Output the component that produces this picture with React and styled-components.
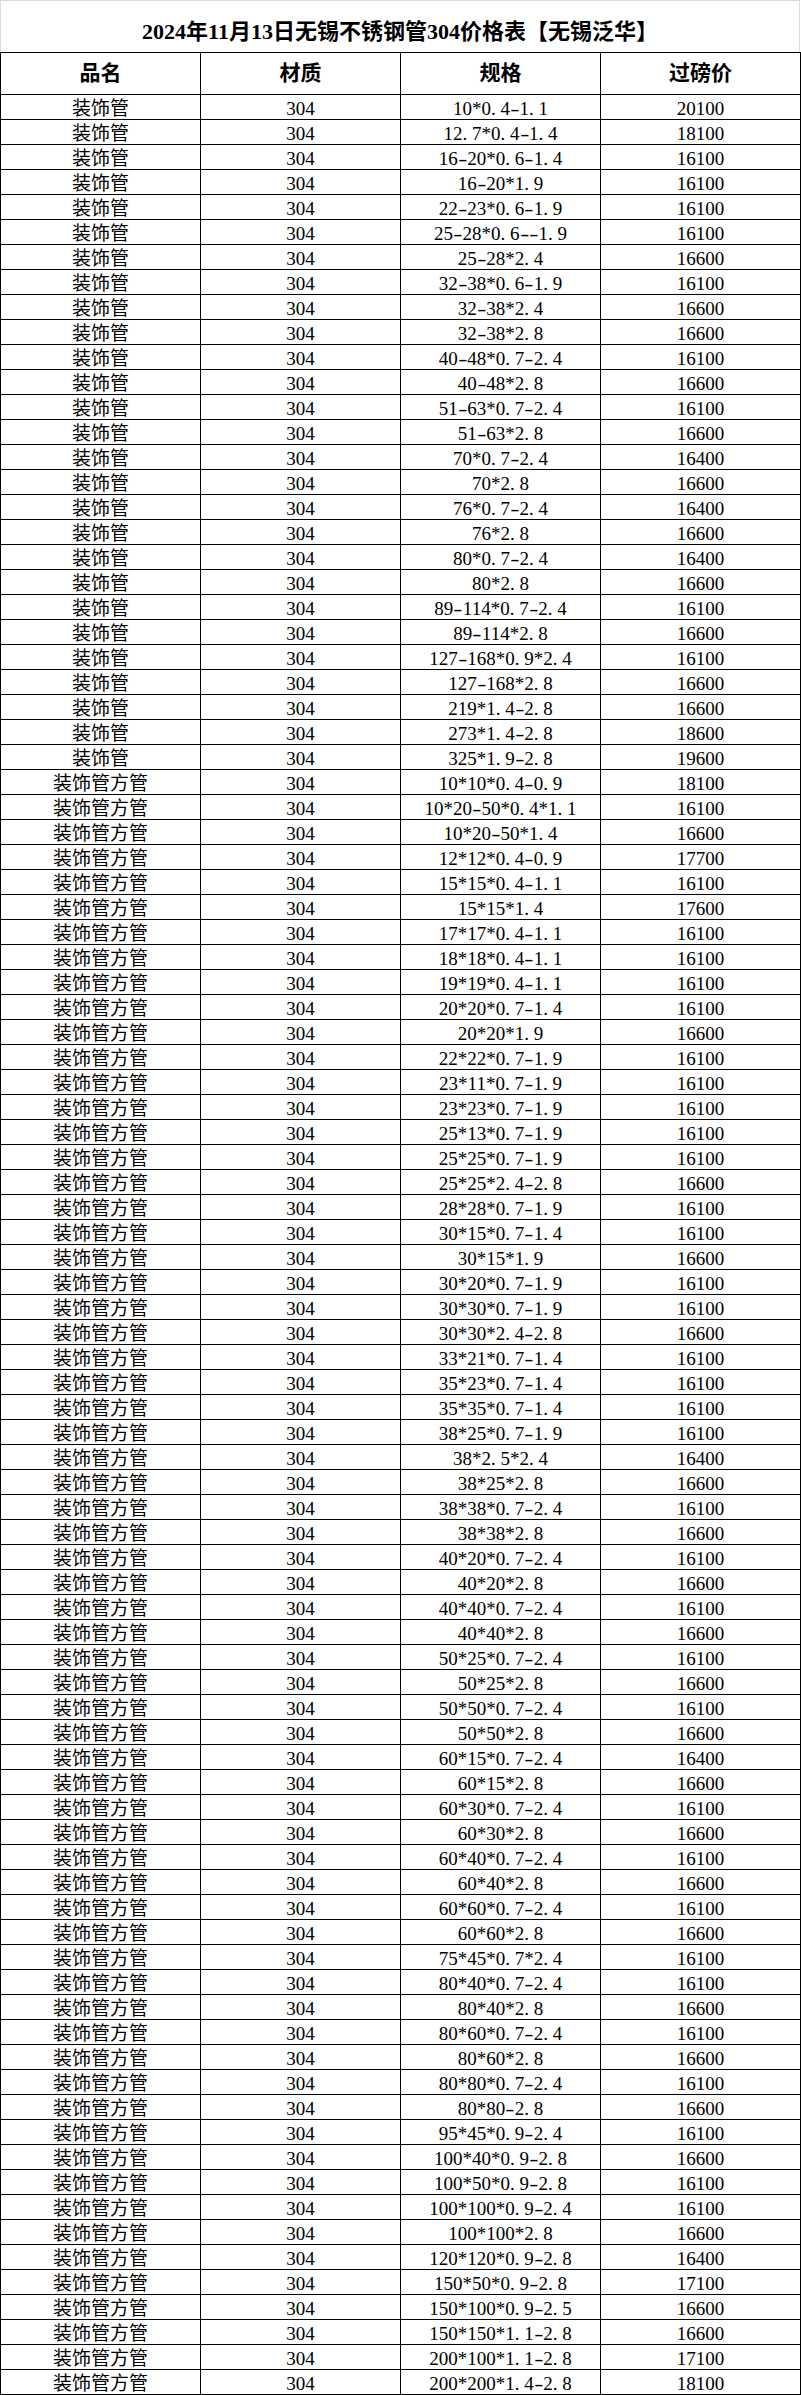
import styled, { createGlobalStyle } from 'styled-components';

const GlobalStyle = createGlobalStyle`
    html, body {
        margin: 0;
        padding: 0;
        background: #ffffff;
    }

    body {
        font-family: "Liberation Serif", "Noto Sans CJK SC", serif;
        color: #000000;
    }
`;

const PIPE = '装饰管';
const SQUARE = '装饰管方管';

// [品名, 规格, 过磅价]
const ROWS = [
    [PIPE, '10*0.4-1.1', '20100'],
    [PIPE, '12.7*0.4-1.4', '18100'],
    [PIPE, '16-20*0.6-1.4', '16100'],
    [PIPE, '16-20*1.9', '16100'],
    [PIPE, '22-23*0.6-1.9', '16100'],
    [PIPE, '25-28*0.6--1.9', '16100'],
    [PIPE, '25-28*2.4', '16600'],
    [PIPE, '32-38*0.6-1.9', '16100'],
    [PIPE, '32-38*2.4', '16600'],
    [PIPE, '32-38*2.8', '16600'],
    [PIPE, '40-48*0.7-2.4', '16100'],
    [PIPE, '40-48*2.8', '16600'],
    [PIPE, '51-63*0.7-2.4', '16100'],
    [PIPE, '51-63*2.8', '16600'],
    [PIPE, '70*0.7-2.4', '16400'],
    [PIPE, '70*2.8', '16600'],
    [PIPE, '76*0.7-2.4', '16400'],
    [PIPE, '76*2.8', '16600'],
    [PIPE, '80*0.7-2.4', '16400'],
    [PIPE, '80*2.8', '16600'],
    [PIPE, '89-114*0.7-2.4', '16100'],
    [PIPE, '89-114*2.8', '16600'],
    [PIPE, '127-168*0.9*2.4', '16100'],
    [PIPE, '127-168*2.8', '16600'],
    [PIPE, '219*1.4-2.8', '16600'],
    [PIPE, '273*1.4-2.8', '18600'],
    [PIPE, '325*1.9-2.8', '19600'],
    [SQUARE, '10*10*0.4-0.9', '18100'],
    [SQUARE, '10*20-50*0.4*1.1', '16100'],
    [SQUARE, '10*20-50*1.4', '16600'],
    [SQUARE, '12*12*0.4-0.9', '17700'],
    [SQUARE, '15*15*0.4-1.1', '16100'],
    [SQUARE, '15*15*1.4', '17600'],
    [SQUARE, '17*17*0.4-1.1', '16100'],
    [SQUARE, '18*18*0.4-1.1', '16100'],
    [SQUARE, '19*19*0.4-1.1', '16100'],
    [SQUARE, '20*20*0.7-1.4', '16100'],
    [SQUARE, '20*20*1.9', '16600'],
    [SQUARE, '22*22*0.7-1.9', '16100'],
    [SQUARE, '23*11*0.7-1.9', '16100'],
    [SQUARE, '23*23*0.7-1.9', '16100'],
    [SQUARE, '25*13*0.7-1.9', '16100'],
    [SQUARE, '25*25*0.7-1.9', '16100'],
    [SQUARE, '25*25*2.4-2.8', '16600'],
    [SQUARE, '28*28*0.7-1.9', '16100'],
    [SQUARE, '30*15*0.7-1.4', '16100'],
    [SQUARE, '30*15*1.9', '16600'],
    [SQUARE, '30*20*0.7-1.9', '16100'],
    [SQUARE, '30*30*0.7-1.9', '16100'],
    [SQUARE, '30*30*2.4-2.8', '16600'],
    [SQUARE, '33*21*0.7-1.4', '16100'],
    [SQUARE, '35*23*0.7-1.4', '16100'],
    [SQUARE, '35*35*0.7-1.4', '16100'],
    [SQUARE, '38*25*0.7-1.9', '16100'],
    [SQUARE, '38*2.5*2.4', '16400'],
    [SQUARE, '38*25*2.8', '16600'],
    [SQUARE, '38*38*0.7-2.4', '16100'],
    [SQUARE, '38*38*2.8', '16600'],
    [SQUARE, '40*20*0.7-2.4', '16100'],
    [SQUARE, '40*20*2.8', '16600'],
    [SQUARE, '40*40*0.7-2.4', '16100'],
    [SQUARE, '40*40*2.8', '16600'],
    [SQUARE, '50*25*0.7-2.4', '16100'],
    [SQUARE, '50*25*2.8', '16600'],
    [SQUARE, '50*50*0.7-2.4', '16100'],
    [SQUARE, '50*50*2.8', '16600'],
    [SQUARE, '60*15*0.7-2.4', '16400'],
    [SQUARE, '60*15*2.8', '16600'],
    [SQUARE, '60*30*0.7-2.4', '16100'],
    [SQUARE, '60*30*2.8', '16600'],
    [SQUARE, '60*40*0.7-2.4', '16100'],
    [SQUARE, '60*40*2.8', '16600'],
    [SQUARE, '60*60*0.7-2.4', '16100'],
    [SQUARE, '60*60*2.8', '16600'],
    [SQUARE, '75*45*0.7*2.4', '16100'],
    [SQUARE, '80*40*0.7-2.4', '16100'],
    [SQUARE, '80*40*2.8', '16600'],
    [SQUARE, '80*60*0.7-2.4', '16100'],
    [SQUARE, '80*60*2.8', '16600'],
    [SQUARE, '80*80*0.7-2.4', '16100'],
    [SQUARE, '80*80-2.8', '16600'],
    [SQUARE, '95*45*0.9-2.4', '16100'],
    [SQUARE, '100*40*0.9-2.8', '16600'],
    [SQUARE, '100*50*0.9-2.8', '16100'],
    [SQUARE, '100*100*0.9-2.4', '16100'],
    [SQUARE, '100*100*2.8', '16600'],
    [SQUARE, '120*120*0.9-2.8', '16400'],
    [SQUARE, '150*50*0.9-2.8', '17100'],
    [SQUARE, '150*100*0.9-2.5', '16600'],
    [SQUARE, '150*150*1.1-2.8', '16600'],
    [SQUARE, '200*100*1.1-2.8', '17100'],
    [SQUARE, '200*200*1.4-2.8', '18100'],
];

const HEADERS = ['品名', '材质', '规格', '过磅价'];

const Sheet = styled.div`
    width: 801px;
`;

const TitleBar = styled.div`
    box-sizing: border-box;
    height: 52px;
    width: 800px;
    border: 1px solid #dcdcdc;
    border-bottom: none;
    display: flex;
    align-items: center;
    justify-content: center;
    padding-top: 4px;
    font-size: 22px;
    font-weight: bold;
    white-space: nowrap;
`;

const Grid = styled.div`
    display: grid;
    grid-template-columns: repeat(4, 200px);
    border-top: 1px solid #000;
    border-left: 1px solid #000;
`;

const Cell = styled.div`
    box-sizing: border-box;
    height: ${(props) => props.$head ? '42px' : '25px'};
    border-right: 1px solid #000;
    border-bottom: 1px solid #000;
    display: flex;
    align-items: center;
    justify-content: center;
    padding-top: ${(props) => props.$head ? '0' : '2px'};
    font-size: ${(props) => props.$head ? '21px' : '19px'};
    font-weight: ${(props) => props.$head ? 'bold' : 'normal'};
    line-height: 1;
    white-space: nowrap;
`;

// half-width cell for punctuation, like the sheet's songti font
const Punct = styled.span`
    display: inline-block;
    width: 0.5em;
    text-align: ${(props) => props.$dot ? 'left' : 'center'};
    transform: ${(props) => props.$dot ? 'none' : 'scaleX(1.45)'};
`;

const Spec = ({ text }) => (
    <span>
        {text.split('').map((ch, i) =>
            ch === '.' || ch === '-'
                ? <Punct key={i} $dot={ch === '.'}>{ch}</Punct>
                : ch
        )}
    </span>
);

const App = () => {
    return (
        <Sheet>
            <GlobalStyle />
            <TitleBar>2024年11月13日无锡不锈钢管304价格表【无锡泛华】</TitleBar>
            <Grid>
                {HEADERS.map((label) => <Cell key={label} $head>{label}</Cell>)}
                {ROWS.map(([name, spec, price], i) => [
                    <Cell key={`n${i}`}>{name}</Cell>,
                    <Cell key={`m${i}`}>304</Cell>,
                    <Cell key={`s${i}`}><Spec text={spec} /></Cell>,
                    <Cell key={`p${i}`}>{price}</Cell>,
                ])}
            </Grid>
        </Sheet>
    );
};

export default App;
